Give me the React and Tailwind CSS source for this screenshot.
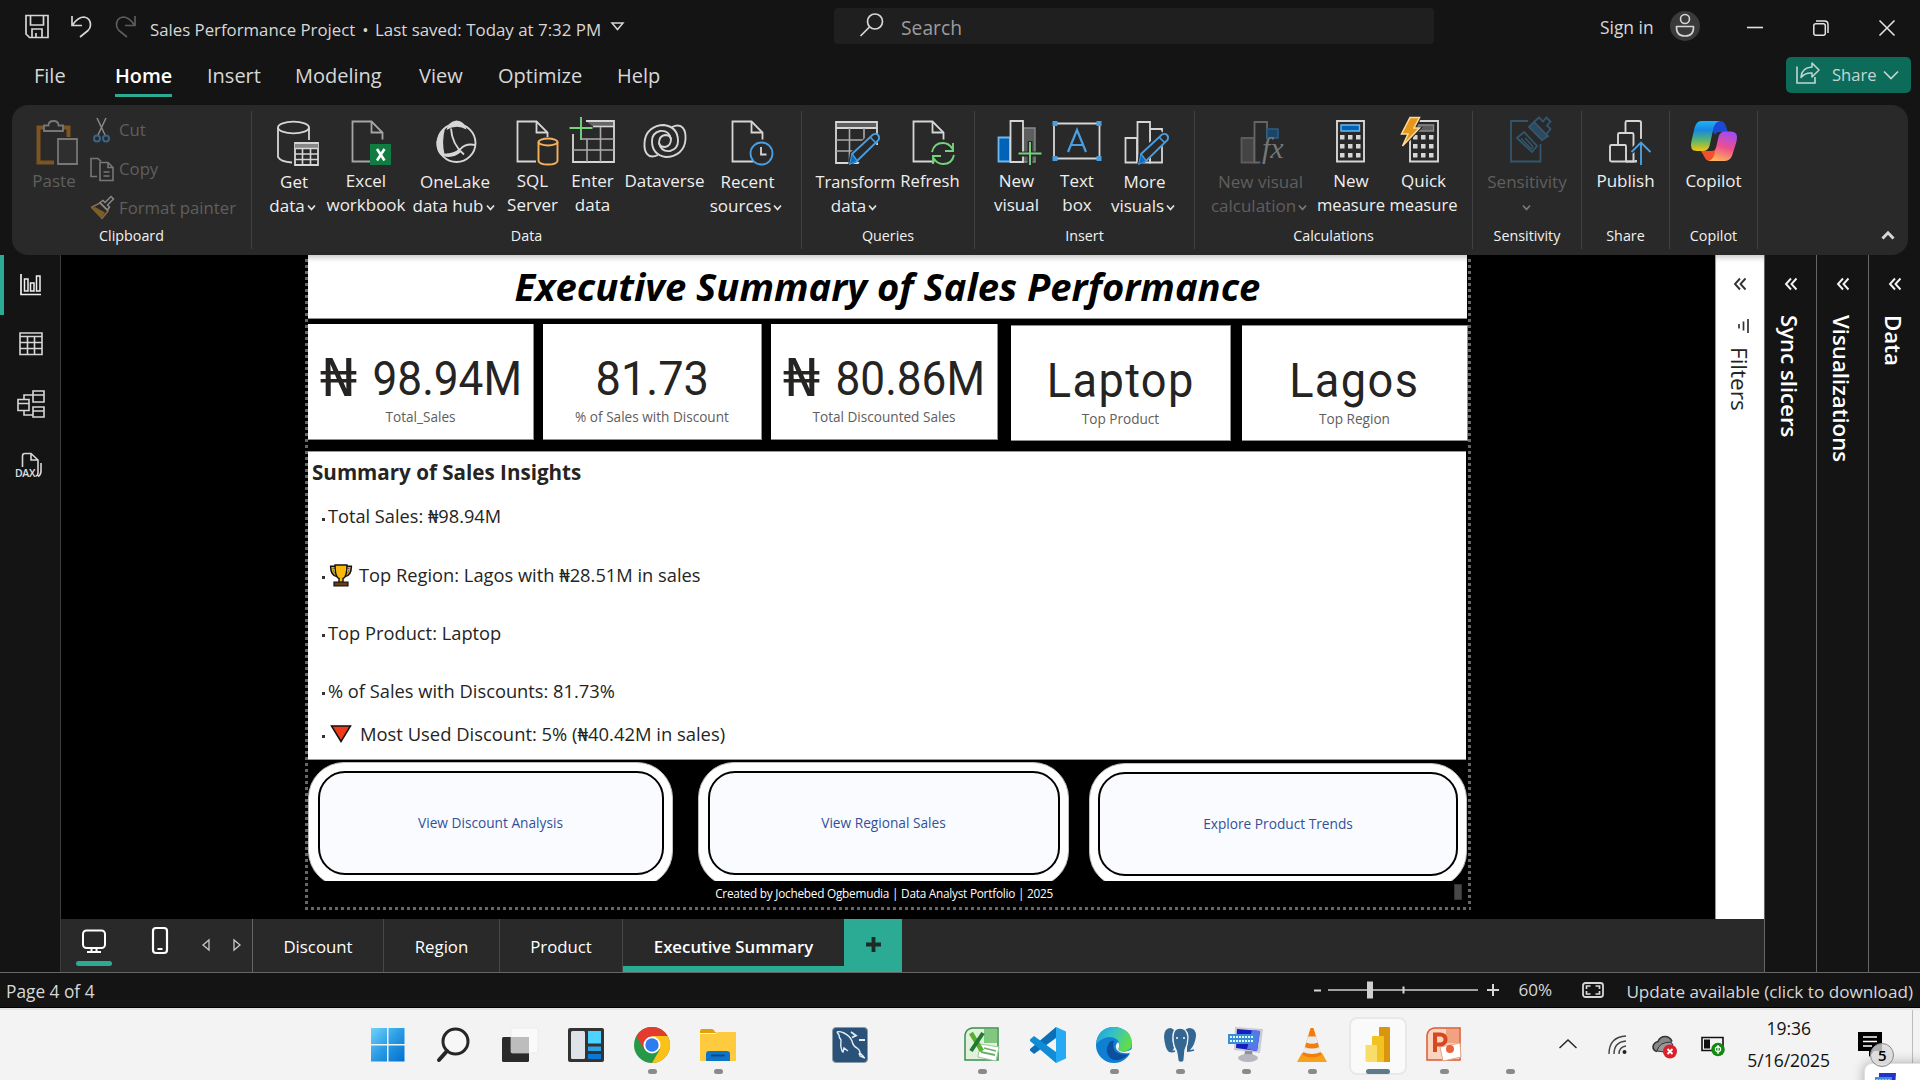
import React from "react";

const W = "#d6d6d6";

/* ---------- shared bits ---------- */
function Svg({ w, h, children, className = "" }) {
  return (
    <svg width={w} height={h} viewBox={`0 0 ${w} ${h}`} fill="none" className={`shrink-0 overflow-visible ${className}`}>
      {children}
    </svg>
  );
}
const Caret = ({ color = "#e4e4e4", className = "ml-[3px] mr-1" }) => (
  <Svg w={9} h={6} className={`mt-1 ${className}`}>
    <path d="M1 .5l3.500 4 3.500-4" stroke={color} strokeWidth="1.700" />
  </Svg>
);
const Doc = ({ x = 13, s = W, f = "none" }) => (
  <g transform={`translate(${x} 5.5)`} stroke={s} strokeWidth="1.8" fill={f}>
    <path d="M31 19V12L20 1H1v40h21" />
    <path d="M20 1v11h11" />
  </g>
);
const Pencil = () => (
  <g>
    <path d="M22 38L44 16l9 8-24 23-9 4z" fill="#292929" />
    <path d="M24 39L45 19.500q3-1.500 5 .5t.5 5L29 46z" stroke="#4a9fe0" strokeWidth="1.800" fill="#292929" />
    <path d="M42 22l5.500 5.500" stroke="#4a9fe0" strokeWidth="1.600" />
    <path d="M24 39l5 7-7.500 3.500z" fill="#0a6cc4" stroke="#4a9fe0" strokeWidth="1" />
  </g>
);

/* ---------- ribbon icons, all on a 56x52 grid ---------- */
const R = ({ children }) => <Svg w={56} h={52}>{children}</Svg>;

const PasteIcon = () => (
  <R>
    <path d="M18 12.500h-5.500v35H28M37 12.500h5.500V22" stroke="#7c5522" strokeWidth="4" />
    <path d="M18 16V10.500h4.500q0-4.500 5-4.500t5 4.500H37V16z" stroke="#777" strokeWidth="1.800" fill="#292929" />
    <path d="M32 24h19v25H32z" stroke="#777" strokeWidth="1.800" fill="#2f2f2f" />
  </R>
);
const GetDataIcon = () => (
  <R>
    <ellipse cx="27.500" cy="12.500" rx="15.500" ry="5.800" stroke={W} strokeWidth="1.800" />
    <path d="M12 12.500V42q3 5 14 5.500M43 12.500V25" stroke={W} strokeWidth="1.800" />
    <path d="M29 28h23v22H29z" fill="#292929" stroke={W} strokeWidth="1.800" />
    <path d="M29 29h23v4H29z" fill="#888" />
    <path d="M29 33.500h23M29 39h23M29 44.500h23M36.500 33v17M44.500 33v17" stroke={W} strokeWidth="1.600" />
  </R>
);
const ExcelDocIcon = () => (
  <R>
    <Doc x={13.5} s="#a6a6a6" />
    <path d="M32 29h21v21H32z" fill="#107c41" />
    <path d="M39 34l7.500 11.500M46.500 34L39 45.500" stroke="#fff" strokeWidth="2.600" />
  </R>
);
const OneLakeIcon = () => (
  <R>
    <circle cx="29.500" cy="28" r="19" stroke={W} strokeWidth="1.900" />
    <path d="M19.500 15q1.500-8.500 10-9.500 8 .5 10 9-10-5.500-20 .5z" fill={W} />
    <path d="M18 13.500q-6 4-8.500 13-.5 9 4 13.500 2.500-1 4-1-3-12 .5-25.500z" fill={W} />
    <path d="M24 13.500q1 16 13 26M14 39.500q13 1 19.500-5.500 5-6 15-4" stroke={W} strokeWidth="1.900" />
    <path d="M13 38q10 3 18-3l3 2q-8 7-18 4z" fill={W} />
  </R>
);
const SqlIcon = () => (
  <R>
    <Doc x={11.5} />
    <path d="M31 22h24v29H31z" fill="#292929" />
    <path d="M33.500 27v19q1 3.500 9.500 3.500t9.500-3.500V27" stroke="#f5b05a" strokeWidth="1.900" />
    <ellipse cx="43" cy="27" rx="9.500" ry="3.500" stroke="#f5b05a" strokeWidth="1.900" />
  </R>
);
const EnterDataIcon = () => (
  <R>
    <path d="M21 6h28v5H27z" fill="#666" />
    <path d="M21 6h28v41H8V19" stroke={W} strokeWidth="1.800" />
    <path d="M28 11.500h21" stroke={W} strokeWidth="1.600" />
    <path d="M16 24h33M8 35h41M22 24v23M35.500 12v35" stroke="#aaa" strokeWidth="1.600" />
    <path d="M16 2v23M4.500 13h23" stroke="#74d47c" strokeWidth="1.900" />
  </R>
);
const DataverseIcon = () => (
  <R>
    <g stroke={W} strokeWidth="1.900">
      <path d="M21 40C10 45 7 36 7.500 28 8 16 17 10 27 10q14 2 14 16 0 8-8 10-9 1-11-8 0-7 6-8 5 0 6 4" />
      <path d="M35 12C46 7 49 16 48.500 24 48 36 39 42 29 42q-14-2-14-16 0-8 8-10 9-1 11 8 0 7-6 8-5 0-6-4" />
    </g>
  </R>
);
const RecentIcon = () => (
  <R>
    <Doc x={11.5} />
    <circle cx="41.500" cy="38.500" r="11" stroke="#4a9fe0" strokeWidth="1.800" fill="#292929" />
    <path d="M41 32v7.500h5.500" stroke={W} strokeWidth="1.800" />
  </R>
);
const TransformIcon = () => (
  <R>
    <path d="M8 7h41v6H8z" fill="#5e5e5e" />
    <path d="M8 7h41v41H8zM8 13h41" stroke={W} strokeWidth="1.800" />
    <path d="M8 25h41M8 36h41M21.500 13v35M36 13v35" stroke="#aaa" strokeWidth="1.600" />
    <path d="M40 30h12v20H30z" fill="#292929" />
    <Pencil />
  </R>
);
const RefreshIcon = () => (
  <R>
    <Doc x={10.5} />
    <path d="M30 37q2-9 11-9 6 0 9.500 6M51 28v8h-8M52 40q-2 9-11 9-6 0-9.500-6M31 49v-8h8" stroke="#74d47c" strokeWidth="1.900" />
  </R>
);
const NewVisualIcon = () => (
  <R>
    <path d="M34 13h12v34H34z" fill="#5e5e5e" stroke="#8a8a8a" strokeWidth="1.400" />
    <path d="M9.500 22.500H21V46.500H9.500z" fill="#0063b8" stroke="#6cb8f0" strokeWidth="1.800" />
    <path d="M21.500 6H34v41H21.500z" fill="#292929" stroke={W} strokeWidth="1.800" />
    <path d="M41 26v25M29 39h24" stroke="#292929" strokeWidth="5" />
    <path d="M41 27v23M29.500 38.500h23" stroke="#74d47c" strokeWidth="1.900" />
  </R>
);
const TextBoxIcon = () => (
  <R>
    <path d="M5 8.500h45.500v35H5z" stroke={W} strokeWidth="1.800" />
    <path d="M3.500 6h5v5h-5zM47.500 6h5v5h-5zM3.500 41h5v5h-5zM47.500 41h5v5h-5z" fill="#4a9fe0" />
    <path d="M19 37l9-22 9 22M22 30h12" stroke="#4a9fe0" strokeWidth="2.200" />
  </R>
);
const MoreVisualsIcon = () => (
  <R>
    <path d="M8.500 23H20v24.500H8.500zM33 14h12v33.500H33z" stroke={W} strokeWidth="1.800" />
    <path d="M20.500 7H33v40.500H20.500z" fill="#292929" stroke={W} strokeWidth="1.800" />
    <Pencil />
  </R>
);
const VisualCalcIcon = () => (
  <R>
    <path d="M8.500 23H21v24.500H8.500z" fill="#444" stroke="#5c5c5c" strokeWidth="1.800" />
    <path d="M21.500 7H34v40.500H21.500z" fill="#292929" stroke="#666" strokeWidth="1.800" />
    <path d="M34 14h11v9H34z" fill="#1a4468" stroke="#2c5c85" strokeWidth="1.600" />
    <path d="M30 24h22v26H27z" fill="#292929" />
    <text x="29" y="43" fill="#777" fontSize="30" fontStyle="italic" fontFamily="Liberation Serif, serif">fx</text>
  </R>
);
const Keys = () => (
  <path d="M17 20h4.500v4.500H17zM25 20h4.500v4.500H25zM33 20h4.500v4.500H33zM17 29h4.500v4.500H17zM25 29h4.500v4.500H25zM33 29h4.500v4.500H33zM17 38h4.500v4.500H17zM25 38h4.500v4.500H25zM33 38h4.500v4.500H33z" fill={W} />
);
const NewMeasureIcon = () => (
  <R>
    <path d="M14 6h27v40.500H14z" stroke={W} strokeWidth="1.900" />
    <path d="M18 10h18.500v6H18z" fill="#0063b8" stroke="#6cb8f0" strokeWidth="1.400" />
    <Keys />
  </R>
);
const QuickMeasureIcon = () => (
  <R>
    <path d="M14 6h28v40.500H14z" stroke={W} strokeWidth="1.900" />
    <path d="M22 10h15.500v6H22z" fill="#5e5e5e" stroke="#8a8a8a" strokeWidth="1.400" />
    <Keys />
    <path d="M13 1h13l-5 11h6L7 33l4-13H3z" fill="#292929" />
    <path d="M14 2.500h9.500L18 13h5.500L6.500 31 12 19H5.500z" fill="#e8951c" stroke="#fbdc9a" strokeWidth="1.500" />
  </R>
);
const SensitivityIcon = () => (
  <R>
    <g stroke="#33566e" strokeWidth="1.800">
      <path d="M29 6H12v40.500h29.500V29" />
      <path d="M18 23l7-6 13 14-5 6z" />
      <path d="M22 23.500l10 10q2 0 1.500-2.500L26 23" strokeWidth="1.500" />
      <path d="M30 12l5-5 14 14-6 4z" fill="#2b4a60" />
      <path d="M35 7l5-4.500 4 4 3.500-4 4 4-3.500 4 3.500 3.500-4 5" />
    </g>
  </R>
);
const PublishIcon = () => (
  <R>
    <g stroke={W} strokeWidth="1.900">
      <path d="M28 46.500H13.500q-1.500 0-1.500-1.500V31.500q0-1.500 1.500-1.500H27q1 0 1 1.500z" />
      <path d="M20 30V19.500q0-1.500 1.500-1.500H34q1.500 0 1.500 1.500V46.500H28" />
      <path d="M27.500 18V7.500Q27.500 6 29 6h12q2 0 2 1.500V24" />
    </g>
    <path d="M43 24v28M33 37l10-10 10 10" stroke="#292929" strokeWidth="5" />
    <path d="M38 45v1.500H28" stroke={W} strokeWidth="1.900" />
    <path d="M43 50V27.500M33.500 37l9.500-9.500 9.500 9.500" stroke="#4a9fe0" strokeWidth="1.900" />
  </R>
);
const CopilotIcon = () => (
  <R>
    <defs>
      <linearGradient id="cpA" x1="0" y1="0" x2="0" y2="1">
        <stop offset="0" stopColor="#1fb3f5" /><stop offset=".3" stopColor="#1687e0" /><stop offset=".65" stopColor="#5bb56c" /><stop offset="1" stopColor="#f5c60c" />
      </linearGradient>
      <linearGradient id="cpB" x1=".6" y1="0" x2=".3" y2="1">
        <stop offset="0" stopColor="#a34bf0" /><stop offset=".5" stopColor="#ee4f8f" /><stop offset="1" stopColor="#ffb657" />
      </linearGradient>
    </defs>
    <path d="M22 6h12q4 0 5.500 4l2.500 7H33q-3 0-4 3z" fill="#1b49d3" />
    <path d="M15 36h11q3 0 4-3l2 13h-8q-4 0-5.500-4z" fill="#f4502e" />
    <path d="M15 6h19q-5 1-6.500 7l-4 18q-1.500 5-6.500 5h-6q-8 0-5.500-10l3-13q2-7 6.500-7z" fill="url(#cpA)" />
    <path d="M39 46H22q5-1 6.500-7l4-17q1.500-5.500 6.500-5.500h6q8 0 5.500 10l-4 13q-2 6.500-7.500 6.500z" fill="url(#cpB)" />
  </R>
);

function Item({ w, icon, l1, l2, caret, dim }) {
  return (
    <div className={`flex flex-col items-center ${w} ${dim ? "text-[#5f5f5f]" : "text-[#efefef]"}`}>
      {icon}
      <div className={`${caret ? "mt-[3px]" : "mt-[2px]"} flex h-6 items-center whitespace-nowrap leading-6`}>{l1}</div>
      <div className="flex h-6 items-center whitespace-nowrap leading-6">
        {l2}
        {caret && <Caret color={dim ? "#7a7a7a" : "#e4e4e4"} className={l2 ? "ml-[2px] mr-[3px]" : "mr-[2px]"} />}
      </div>
    </div>
  );
}
function Group({ w, label, children }) {
  return (
    <div className={`flex h-[138px] flex-col justify-between border-r border-[#404040] pb-[3px] pt-1 ${w}`}>
      <div className="flex h-[102px]">{children}</div>
      <div className="h-5 text-center text-[14.3px] leading-5 text-[#f2f2f2]">{label}</div>
    </div>
  );
}

function TitleBar() {
  return (
    <div className="flex h-[52px] items-start text-[17px] text-[#d8d8d8]">
      <div className="flex w-[834px] pl-[25px] pt-[14px]">
        <Svg w={24} h={24}>
          <path d="M1 1.500h22v22H4.500L1 20zM5.500 1.500v9.500h13V1.500M7 23.500V15h10v8.500M11 23v-4" stroke={W} strokeWidth="1.700" />
        </Svg>
        <Svg w={22} h={24} className="ml-[22px]">
          <path d="M1 2v9.500h10M1.500 11Q7 3 13 3q6.500 1 6.500 8 0 3-2.500 5.500L9 23" stroke={W} strokeWidth="1.700" />
        </Svg>
        <Svg w={22} h={24} className="ml-[21px]">
          <path d="M21 2v9.500H11M20.500 11Q15 3 9 3q-6.500 1-6.500 8 0 3 2.500 5.500L13 23" stroke="#5c5c5c" strokeWidth="1.700" />
        </Svg>
        <div className="ml-[14px] mt-[4px] flex h-6 items-center whitespace-nowrap text-[16.8px]">
          <span className="w-[206px]">Sales Performance Project</span>
          <span className="w-[19px] text-center">•</span>
          <span className="w-[227px] text-[16.9px]">Last saved: Today at 7:32 PM</span>
        </div>
        <Svg w={13} h={9} className="ml-[9px] mt-[8px]">
          <path d="M1 1h11L6.500 7.500z" stroke={W} strokeWidth="1.500" />
        </Svg>
      </div>
      <div className="mt-2 flex h-9 w-[600px] items-center rounded bg-[#1f1f1f] pl-[26px]">
        <Svg w={24} h={24} className="-mt-[3px]">
          <circle cx="15" cy="8.500" r="7.500" stroke={W} strokeWidth="1.700" />
          <path d="M9.500 14L.5 23" stroke={W} strokeWidth="1.700" />
        </Svg>
        <span className="ml-[17px] mt-[4px] text-[19.3px] text-[#9c9c9c]">Search</span>
      </div>
      <div className="flex flex-1 items-start">
        <span className="ml-[166px] mt-[15px] w-[70px] whitespace-nowrap text-[17.400px] leading-6">Sign in</span>
        <Svg w={30} h={30} className="mt-[11px]">
          <circle cx="15" cy="15" r="15" fill="#3a3a3a" />
          <circle cx="15" cy="8" r="4.500" stroke={W} strokeWidth="1.600" />
          <path d="M6.500 15.500h17q.5 9.500-8.500 9.500T6.500 15.500z" stroke={W} strokeWidth="1.600" strokeLinejoin="round" />
        </Svg>
        <Svg w={16} h={16} className="ml-[47px] mt-[20px]"><path d="M0 7.500h16" stroke="#e2e2e2" strokeWidth="1.600" /></Svg>
        <Svg w={16} h={16} className="ml-[50px] mt-[20px]">
          <rect x=".8" y="3.800" width="11.500" height="11.500" rx="2" stroke="#e2e2e2" strokeWidth="1.500" />
          <path d="M3 1h8.500q3.500 0 3.500 3.500V13" stroke="#e2e2e2" strokeWidth="1.500" />
        </Svg>
        <Svg w={16} h={16} className="ml-[50px] mt-[20px]"><path d="M.5.5l15 15M15.500.5l-15 15" stroke="#e2e2e2" strokeWidth="1.600" /></Svg>
      </div>
    </div>
  );
}

function MenuRow() {
  const items = [["File", "w-[81px]"], ["Home", "w-[92px]"], ["Insert", "w-[88px]"], ["Modeling", "w-[124px]"], ["View", "w-[79px]"], ["Optimize", "w-[119px]"], ["Help", "w-[80px]"]];
  return (
    <div className="flex h-[53px] justify-between pl-[34px] pr-[9px] text-[20px] text-[#d8d8d8]">
      <div className="flex pt-[9px]">
        {items.map(([t, w]) => (
          <div key={t} className={w}>
            <span className={t === "Home" ? "inline-block h-[36px] whitespace-nowrap border-b-[3px] border-[#2baa94] text-[19.8px] font-semibold leading-[30px] text-white" : "inline-block leading-[30px]"}>{t}</span>
          </div>
        ))}
      </div>
      <div className="mt-[5px] flex h-9 w-[125px] items-center rounded-[5px] bg-[#0d6b5a] pl-[10px] text-[#c5d6d2]">
        <Svg w={24} h={22} className="-mt-1">
          <path d="M1 4.500v16.500h18v-6" stroke="#c5d6d2" strokeWidth="1.600" />
          <path d="M5 15.500Q5.500 5.500 16 5V1l7 7-7 7v-4Q9 10.500 5 15.500z" stroke="#c5d6d2" strokeWidth="1.500" strokeLinejoin="round" />
        </Svg>
        <span className="ml-[12px] mt-px text-[16.6px]">Share</span>
        <Svg w={16} h={9} className="ml-[6px]"><path d="M1 .5l7 7 7-7" stroke="#c5d6d2" strokeWidth="1.700" /></Svg>
      </div>
    </div>
  );
}

function Ribbon() {
  return (
    <div className="mx-3 flex h-[150px] rounded-2xl bg-[#292929] pt-1.5 text-[17px]">
      <Group w="w-[240px]" label="Clipboard">
        <div className="ml-3"><Item w="w-[60px]" icon={<PasteIcon />} l1="Paste" dim /></div>
        <div className="-mt-[5px] flex flex-col text-[16.75px] text-[#5f5f5f]">
          <div className="flex h-[39px] shrink-0 items-center">
            <Svg w={32} h={26}>
              <path d="M13 1l8.500 18M22 1l-8.500 18" stroke="#8a8a8a" strokeWidth="1.500" />
              <circle cx="13" cy="21.500" r="3" stroke="#3b6385" strokeWidth="2" /><circle cx="22" cy="21.500" r="3" stroke="#3b6385" strokeWidth="2" />
            </Svg>
            <span className="ml-[3px]">Cut</span>
          </div>
          <div className="flex h-[39px] shrink-0 items-center">
            <Svg w={32} h={26}>
              <path d="M13 20.500H7v-18h7l3 3" stroke="#777" strokeWidth="1.600" />
              <path d="M16 6.500h8l5 5v13H16zM24 6.500v5h5M19.500 16h6M19.500 20h6" stroke="#777" strokeWidth="1.600" />
            </Svg>
            <span className="ml-[3px]">Copy</span>
          </div>
          <div className="flex h-[39px] shrink-0 items-center">
            <Svg w={32} h={26}>
              <path d="M7 13l10 10.500 4-6L11 12z" fill="#7c5f28" />
              <path d="M7 12.500l9-4.500 8 8-6.500 8" stroke="#86704a" strokeWidth="1.500" />
              <path d="M16 7.500l3-2 2 2L27 1.500l2.500 2.500-6 6 2 2-2 3z" stroke="#888" strokeWidth="1.500" />
            </Svg>
            <span className="ml-[3px] whitespace-nowrap">Format painter</span>
          </div>
        </div>
      </Group>
      <Group w="w-[550px]" label="Data">
        <div className="w-3" />
        <Item w="w-[60px]" icon={<GetDataIcon />} l1="Get" l2="data" caret />
        <Item w="w-[84px]" icon={<ExcelDocIcon />} l1="Excel" l2="workbook" />
        <Item w="w-[94px]" icon={<OneLakeIcon />} l1="OneLake" l2="data hub" caret />
        <Item w="w-[61px]" icon={<SqlIcon />} l1="SQL" l2="Server" />
        <Item w="w-[59px]" icon={<EnterDataIcon />} l1="Enter" l2="data" />
        <Item w="w-[85px]" icon={<DataverseIcon />} l1="Dataverse" />
        <Item w="w-[81px]" icon={<RecentIcon />} l1="Recent" l2="sources" caret />
      </Group>
      <Group w="w-[173px]" label="Queries">
        <div className="w-[11px]" />
        <Item w="w-[85px]" icon={<TransformIcon />} l1={<span className="text-[16.4px]">Transform</span>} l2="data" caret />
        <Item w="w-[64px]" icon={<RefreshIcon />} l1={<span className="text-[16.6px]">Refresh</span>} />
      </Group>
      <Group w="w-[220px]" label="Insert">
        <div className="w-[17px]" />
        <Item w="w-[49px]" icon={<NewVisualIcon />} l1="New" l2="visual" />
        <Item w="w-[72px]" icon={<TextBoxIcon />} l1="Text" l2="box" />
        <Item w="w-[63px]" icon={<MoreVisualsIcon />} l1="More" l2="visuals" caret />
      </Group>
      <Group w="w-[278px]" label="Calculations">
        <div className="w-[10px]" />
        <Item w="w-[111px]" icon={<VisualCalcIcon />} l1="New visual" l2="calculation" caret dim />
        <Item w="w-[70px]" icon={<NewMeasureIcon />} l1="New" l2={<span className="text-[16.6px]">measure</span>} />
        <Item w="w-[75px]" icon={<QuickMeasureIcon />} l1="Quick" l2={<span className="text-[16.6px]">measure</span>} />
      </Group>
      <Group w="w-[109px]" label="Sensitivity">
        <Item w="w-[108px]" icon={<SensitivityIcon />} l1="Sensitivity" caret dim />
      </Group>
      <Group w="w-[88px]" label="Share">
        <Item w="w-[87px]" icon={<PublishIcon />} l1="Publish" />
      </Group>
      <Group w="w-[88px]" label="Copilot">
        <Item w="w-[87px]" icon={<CopilotIcon />} l1="Copilot" />
      </Group>
      <div className="flex flex-1 items-end justify-end pb-[15px] pr-[13px]">
        <Svg w={14} h={9}><path d="M1.500 7.500L7 1.800l5.500 5.700" stroke={W} strokeWidth="3" /></Svg>
      </div>
    </div>
  );
}

function LeftRail() {
  return (
    <div className="flex w-[61px] shrink-0 flex-col border-r border-[#3c3c3c] bg-[#141414]">
      <div className="flex h-[60px] items-center border-l-4 border-[#2baa94] pb-px pl-4">
        <Svg w={22} h={22}>
          <path d="M1 0v20.500h20" stroke="#f0f0f0" strokeWidth="1.700" />
          <path d="M4.500 5h3.500v12H4.500zM10.500 9H14v8h-3.500zM16.500 2H20v15h-3.500z" stroke="#f0f0f0" strokeWidth="1.500" />
        </Svg>
      </div>
      <div className="-mt-px flex h-[60px] items-center pl-[19px]">
        <Svg w={24} h={24}>
          <path d="M1 1h22v21.500H1zM1 4.500h22M1 10.500h22M1 16.500h22M8.500 4.500v18M15.500 4.500v18" stroke={W} strokeWidth="1.600" />
        </Svg>
      </div>
      <div className="flex h-[60px] items-center pl-[17px]">
        <Svg w={28} h={28}>
          <path d="M1 9.500h11v11H1zM1 13.500h11M16 1h11v11H16zM16 5h11M16 17h11v10H16zM16 21h11M7 9V5h9M7 21v4h9" stroke={W} strokeWidth="1.600" />
        </Svg>
      </div>
      <div className="flex h-[61px] items-center pl-[15px]">
        <Svg w={28} h={26}>
          <path d="M7.500 15V4q0-2.500 2.500-2.500h6L23 8v12q0 4-2.500 4M16 1.500V8h7M26 11v8q0 4-3 5.500" stroke={W} strokeWidth="1.600" />
          <text x="0" y="25" fontSize="10.500" fontWeight="600" fill="#e0e0e0" fontFamily="Open Sans, sans-serif" textLength="20.500">DAX</text>
        </Svg>
      </div>
    </div>
  );
}

function Card({ className, naira, value, scale, label }) {
  return (
    <div className={`flex h-[116px] flex-col items-center border-b border-r border-[#8f8f8f] bg-white pt-px ${className}`}>
      <div className="mt-[29px] flex h-[50px] items-center whitespace-nowrap font-[Roboto] text-[48px] leading-[50px] text-[#252423]">
        {naira && <span className="-mt-[7px] mr-[16px] flex w-[37px] scale-x-[1.22] justify-center font-['Noto_Sans'] text-[53px] font-normal leading-[50px]">₦</span>}
        <span className={scale}>{value}</span>
      </div>
      <div className="mt-[3px] whitespace-nowrap text-[13.6px] leading-5 text-[#605e5c]">{label}</div>
    </div>
  );
}

function NavButton({ w, inner, label, className = "" }) {
  return (
    <div className={`flex h-[119px] items-start justify-center overflow-hidden ${w} ${className}`}>
      <div className="flex h-[125px] w-full shrink-0 items-start justify-center rounded-[36px] border border-[#bdbdbd] bg-white pt-2">
        <div className={`flex h-[104px] items-center justify-center rounded-[27px] border-[2.500px] border-black bg-[#fafbfe] text-[13.7px] text-[#31509b] ${inner}`}>
          {label}
        </div>
      </div>
    </div>
  );
}

const Trophy = () => (
  <Svg w={22} h={23}>
    <path d="M6 3H1.500q0 8 6 9M16 3h4.500q0 8-6 9" stroke="#111" strokeWidth="3.200" />
    <path d="M6 3.500H2q.5 6.500 5 8M16 3.500h4q-.5 6.500-5 8" stroke="#f2b10e" strokeWidth="1.200" />
    <path d="M5 1h12q0 12-4 13.500v4h-4v-4Q5 13 5 1z" fill="#f8b90c" stroke="#111" strokeWidth="1.400" />
    <path d="M4 18h14v4H4z" fill="#6b3b18" stroke="#111" strokeWidth="1.200" />
  </Svg>
);
const RedTriangle = () => (
  <Svg w={22} h={18}><path d="M1.500 1h19L11 16.500z" fill="#f03a17" stroke="#111" strokeWidth="1.500" /></Svg>
);
const Naira = () => <span className="font-['Noto_Sans']">₦</span>;

function Bullet({ h, icon, children }) {
  return (
    <li className={`flex items-center whitespace-nowrap ${h}`}>
      <span className="mr-[5px] mt-[5px] h-[3px] w-[3px] bg-[#333]" />
      {icon}
      <span className={icon ? "ml-[7px]" : "-ml-[2px]"}>{children}</span>
    </li>
  );
}

const DOT_V = "bg-[repeating-linear-gradient(180deg,#666_0_3px,transparent_3px_6px)]";
const DOT_H = "bg-[repeating-linear-gradient(90deg,#666_0_3px,transparent_3px_6px)]";

function Report() {
  return (
    <div className="flex flex-1 flex-col bg-black pl-[244px] font-['Open_Sans']">
      <div className="flex h-[652px]">
        <div className={`mt-1 w-[3px] ${DOT_V}`} />
        <div className="w-[1160px]">
          <div className="flex h-[64px] w-[1159px] items-center justify-center border-b border-[#8f8f8f] bg-white text-[38.2px] font-bold italic text-black shadow-[inset_0_6px_6px_-4px_rgba(0,0,0,0.25)]">
            Executive Summary of Sales Performance
          </div>
          <div className="mt-[5px] flex">
            <Card className="w-[226px]" naira value="98.94M" scale="scale-x-[0.92] -mx-[7px]" label="Total_Sales" />
            <Card className="ml-[9px] w-[219px]" value="81.73" scale="scale-x-[0.94]" label="% of Sales with Discount" />
            <Card className="ml-[9px] w-[227px]" naira value="80.86M" scale="scale-x-[0.92] -mx-[7px]" label="Total Discounted Sales" />
            <Card className="ml-[13px] mt-px w-[220px] border-t" value="Laptop" scale="scale-x-[0.94] tracking-[1.500px]" label="Top Product" />
            <Card className="ml-[11px] mt-px w-[226px] border-t" value="Lagos" scale="scale-x-[0.94] tracking-[1.500px]" label="Top Region" />
          </div>
          <div className="mt-[10px] h-[309px] w-[1158px] border-b border-t border-[#9a9a9a] bg-white pl-1 text-[#252423]">
            <h2 className="mt-[5px] text-[20.6px] font-bold leading-[30px]">Summary of Sales Insights</h2>
            <ul className="ml-[10px] text-[18.3px]">
              <Bullet h="mt-[15px] h-[30px] text-[18.200px]">Total Sales: <Naira />98.94M</Bullet>
              <Bullet h="mt-[28px] h-[30px]" icon={<Trophy />}>Top Region: Lagos with <Naira />28.51M in sales</Bullet>
              <Bullet h="mt-[28px] h-[30px]">Top Product: Laptop</Bullet>
              <Bullet h="mt-[28px] h-[30px]">% of Sales with Discounts: 81.73%</Bullet>
              <Bullet h="mt-[13px] h-[30px]" icon={<RedTriangle />}><span className="ml-px text-[18.4px]">Most Used Discount: 5% (<Naira />40.42M in sales)</span></Bullet>
            </ul>
          </div>
          <div className="mt-[2px] flex">
            <NavButton w="w-[365px]" inner="w-[346px]" label="View Discount Analysis" />
            <NavButton w="w-[371px]" inner="w-[352px]" label="View Regional Sales" className="ml-[25px]" />
            <NavButton w="w-[378px]" inner="w-[360px]" label="Explore Product Trends" className="ml-[20px] pt-px" />
          </div>
          <div className="flex h-[26px] items-center justify-end">
            <span className="mr-[401px] whitespace-nowrap text-[11.8px] font-medium tracking-[-0.24px] text-white">Created by Jochebed Ogbemudia | Data Analyst Portfolio | 2025</span>
            <span className="mr-[6px] mt-[-4px] h-4 w-2 border border-[#333] bg-[#484848]" />
          </div>
        </div>
        <div className={`mt-1 w-[3px] ${DOT_V}`} />
      </div>
      <div className={`h-[3px] w-[1166px] ${DOT_H}`} />
    </div>
  );
}

function PageTabs() {
  return (
    <div className="flex h-[53px] bg-[#292929] text-[16.8px] text-white">
      <div className="flex w-[192px] border-r border-[#666]">
        <div className="ml-[15px] mt-[10px] flex w-9 flex-col items-center">
          <Svg w={24} h={24}>
            <rect x="1" y="1.500" width="22" height="17.500" rx="3.500" stroke="#fff" strokeWidth="2" />
            <path d="M9.500 19v3.500M14.500 19v3.500M5 23h14" stroke="#fff" strokeWidth="2" />
          </Svg>
          <div className="mt-[8px] h-[5px] w-9 rounded-full bg-[#2baa94]" />
        </div>
        <Svg w={16} h={28} className="ml-[40px] mt-[8px]">
          <rect x="1" y="1" width="14" height="25" rx="3" stroke="#fff" strokeWidth="2.200" /><path d="M5.500 22h5" stroke="#fff" strokeWidth="2" />
        </Svg>
        <Svg w={8} h={12} className="ml-[34px] mt-[20px]"><path d="M7 1v10L1 6z" stroke="#c8c8c8" strokeWidth="1.300" /></Svg>
        <Svg w={8} h={12} className="ml-[23px] mt-[20px]"><path d="M1 1v10l6-5z" stroke="#c8c8c8" strokeWidth="1.300" /></Svg>
      </div>
      <div className="flex w-[131px] items-center justify-center border-r border-[#484848] pt-[2px]">Discount</div>
      <div className="flex w-[116px] items-center justify-center border-r border-[#484848] pt-[2px]">Region</div>
      <div className="flex w-[123px] items-center justify-center border-r border-[#484848] pt-[2px]">Product</div>
      <div className="flex w-[221px] items-center justify-center border-b-[6px] border-[#2baa94] pt-[8px] font-semibold">Executive Summary</div>
      <div className="flex w-[58px] items-center justify-center bg-[#2baa94] pb-[3px]">
        <Svg w={15} h={15}><path d="M7.500 0v15M0 7.500h15" stroke="#1d2b28" strokeWidth="3.800" /></Svg>
      </div>
    </div>
  );
}

const Chevrons = ({ c }) => (
  <Svg w={12} h={12}><path d="M6 .5L1 6l5 5.500M11.500.5L6.500 6l5 5.500" stroke={c} strokeWidth="1.900" /></Svg>
);
function SidePanel({ title }) {
  return (
    <div className="flex w-[52px] flex-col items-center border-l border-[#666] bg-[#141414] pt-[23px]">
      <Chevrons c="#f4f4f4" />
      <div className="mt-[25px] mr-[3px] whitespace-nowrap text-[22.2px] font-semibold leading-[30px] text-white [writing-mode:vertical-rl]">{title}</div>
    </div>
  );
}

function StatusBar() {
  return (
    <div className="flex h-9 items-center justify-between border-b border-t border-b-black border-t-[#666] bg-[#141414] pl-[6px] pr-[7px] text-[17.1px] text-[#d8d8d8]">
      <span className="mt-[3px] text-[17.3px]">Page 4 of 4</span>
      <div className="flex items-center whitespace-nowrap">
        <Svg w={186} h={18} className="mr-[18px]">
          <path d="M0 9.500h7M173 9h12M179 3v12" stroke={W} strokeWidth="2" />
          <path d="M14 9h150" stroke="#cfcfcf" strokeWidth="1.300" />
          <path d="M53 .5h6v17h-6z" fill="#d0d0d0" /><path d="M89.500 5.500v7" stroke={W} strokeWidth="2" />
        </Svg>
        <span className="w-[64px] text-[17.1px]">60%</span>
        <Svg w={22} h={16} className="mr-[22px]">
          <rect x="1" y="1" width="20" height="14" rx="2.500" stroke={W} strokeWidth="1.800" />
          <path d="M4.500 7V4h4M17.500 7V4h-4M4.500 9v3h4M17.500 9v3h-4" stroke={W} strokeWidth="1.700" />
        </Svg>
        <span className="mt-[3px] text-[17.15px]">Update available (click to download)</span>
      </div>
    </div>
  );
}

/* ---------- taskbar icons, 36x36 ---------- */
const T = ({ children }) => <Svg w={36} h={36}>{children}</Svg>;
const Windows = () => (
  <T>
    <defs><linearGradient id="win" x1="0" y1="0" x2="1" y2="1"><stop offset="0" stopColor="#6fd3fb" /><stop offset=".5" stopColor="#2a9be4" /><stop offset="1" stopColor="#0070cf" /></linearGradient></defs>
    <path d="M1 1h16v16H1zM18.500 1h16v16h-16zM1 18.500h16v16H1zM18.500 18.500h16v16h-16z" fill="url(#win)" />
  </T>
);
const TaskSearch = () => (
  <T><circle cx="19.500" cy="14.500" r="12.500" stroke="#262626" strokeWidth="3" fill="#f7f7f7" /><path d="M11 24L3 33" stroke="#262626" strokeWidth="4" strokeLinecap="round" /></T>
);
const TaskView = () => (
  <T><rect x="0" y="10" width="27" height="25" rx="1.500" fill="#2b2b2b" /><rect x="9" y="1" width="27" height="25" rx="1.500" fill="#fafafa" stroke="#e6e6e6" strokeWidth=".6" /><path d="M9 10h18v16H9z" fill="#bdbdbd" /></T>
);
const Widgets = () => (
  <T>
    <rect x="0" y="1" width="36" height="34" rx="2" fill="#333" />
    <rect x="3" y="4" width="14" height="28" rx="1.500" fill="#dfe3e8" /><path d="M20 4h13v12.500H20z" fill="#4cd3ff" /><path d="M20 19.500h13v4.500H20z" fill="#2aa2e6" /><path d="M20 27h13v5H20z" fill="#0a78d8" />
  </T>
);
const Chrome = () => (
  <T>
    <circle cx="18" cy="18" r="18" fill="#279847" />
    <path d="M2.400 9A18 18 0 0 1 33.600 9H18L10.200 22.500z" fill="#e33b2e" />
    <path d="M33.600 9A18 18 0 0 1 18 36l7.800-13.500L18 9z" fill="#fbc116" />
    <circle cx="18" cy="18" r="8.500" fill="#fff" /><circle cx="18" cy="18" r="6.700" fill="#2f7cf0" />
  </T>
);
const Folder = () => (
  <T>
    <path d="M0 4q0-2 2-2h10q2 0 3 3l2 1H0z" fill="#e2a108" /><path d="M0 7h15l3-2h18v29H0z" fill="#fecb3f" />
    <path d="M6 34v-7q0-3 3-3h18q3 0 3 3v7z" fill="#0e74c8" /><path d="M12 28.500h12" stroke="#0a4a88" strokeWidth="2" strokeLinecap="round" />
  </T>
);
const MySql = () => (
  <T>
    <rect x=".5" y=".5" width="35" height="35" rx="3.500" fill="#2a5279" stroke="#8a9aa8" />
    <path d="M5 5q2-1 7 1 6 3 8 8 1 5 5 7 3 2 3 5l4 4M5 5l2 3q0 3 2 5-1 6 1 11l1 1 1-4 4 3M27 26l1 3 5 2" stroke="#e3edf5" strokeWidth="1.400" />
    <path d="M19 5l5 3.500-4 2M27 13h6" stroke="#e3edf5" strokeWidth="1.800" />
  </T>
);
const Excel = () => (
  <T>
    <path d="M8 1h26v32H1V8q1-6 7-7z" fill="#e2f1dc" stroke="#3a8f4c" strokeWidth="1.500" />
    <path d="M20 2h13v14H20z" fill="#82c77f" /><path d="M16 17l19 3-3 14-18-4z" fill="#fff" stroke="#9cc99c" />
    <path d="M20 21l12 3M17 25l14 3" stroke="#6ab06a" strokeWidth="1.800" />
    <path d="M7 6l11 18" stroke="#5aae32" strokeWidth="4.500" /><path d="M19 6L7 24" stroke="#1f7a34" strokeWidth="4" />
  </T>
);
const VsCode = () => (
  <T>
    <path d="M26 0v11L4 27 0 23.500V22z" fill="#0b6fb8" /><path d="M26 36V25L4 9 0 12.500V14z" fill="#108bd6" /><path d="M26 0l10 4.500v27L26 36z" fill="#27a9f4" />
  </T>
);
const Edge = () => (
  <T>
    <defs>
      <linearGradient id="eg1" x1="0" y1="0" x2="1" y2=".4"><stop offset="0" stopColor="#1c9be0" /><stop offset=".5" stopColor="#35c1c9" /><stop offset="1" stopColor="#5fdc4f" /></linearGradient>
    </defs>
    <circle cx="18" cy="18" r="18" fill="#0f7fd4" />
    <path d="M0 17Q2 0 18 0q17 1 18 16 0 8-9 8.500-6 0-5-3 3-5-1-9Q11 6 0 17z" fill="url(#eg1)" />
    <path d="M13 16q-5 8 1 15 8 6 19-4-9 2-14-3-3-4-1-10-3-1-5 2z" fill="#0c4f9e" />
    <path d="M22 15q-4 4-1 8 4 4 12 3l3 2v-6q-6 4-12 2-3-1-1-4 1-3-1-5z" fill="#f3f3f3" />
  </T>
);
const Postgres = () => (
  <T>
    <path d="M9 1Q2 1 2 10q1 12 5 15 3 1 5-4-3-10 0-18zM27 1q7 0 7 8-1 9-6 14h-3q1-14-3-20z" fill="#336791" />
    <path d="M18 1q-7 0-7 9 0 8 3 13 1 2 2 11 3 3 6 0l1-11q3-6 3-13Q25 1 18 1z" fill="#336791" stroke="#f3f3f3" strokeWidth="1.300" />
    <path d="M13 24q-3 1-5 0M25 24q4 0 7-1" stroke="#336791" strokeWidth="1.800" /><circle cx="15" cy="11" r="1" fill="#fff" /><circle cx="22" cy="11" r="1" fill="#fff" />
  </T>
);
const Monitor = () => (
  <T>
    <path d="M7 0l28 2-3 24-26-3z" fill="#c9ccd4" /><path d="M9 2l23 2-3 20-21-3z" fill="#141fbd" /><path d="M24 3l8 1-3 20-10-2z" fill="#5a74ee" />
    <path d="M0 7h27v10H0z" fill="#3b8fd8" /><path d="M2 10h23M2 14h23" stroke="#dff" strokeWidth="1.800" strokeDasharray="2 1" />
    <path d="M17 24h7l1 6h-9z" fill="#8f9196" /><ellipse cx="20" cy="31" rx="10" ry="4" fill="#b5b7bc" />
  </T>
);
const Vlc = () => (
  <T>
    <path d="M8 26h20l5 9H3z" fill="#f7a01c" /><path d="M16.500 1h3l8 27q-9.500 5-19 0z" fill="#f27c0c" /><path d="M14 9.500h8l2 6q-6 2.500-12 0zM10.500 20q7.500 3 15 0l1.500 5q-9 4-18 0z" fill="#e9ecef" />
  </T>
);
const PowerBi = () => (
  <T>
    <path d="M20 0h9q1 0 1 1v34H19V1q0-1 1-1z" fill="#d8960f" /><path d="M13 9h10q1 0 1 1v25H12V10q0-1 1-1z" fill="#f2c220" /><path d="M6 18h10q1 0 1 1v16H7q-1.500 0-1.500-1.500V18.500z" fill="#f9dd6b" />
  </T>
);
const PowerPoint = () => (
  <T>
    <path d="M8 1h26v32H1V8q1-6 7-7z" fill="#fbd3bf" stroke="#d95b33" strokeWidth="1.500" />
    <path d="M20 2h13v14H20z" fill="#f2a27f" /><path d="M14 20l20-4 1 14-18 4z" fill="#fff" stroke="#e4a58c" /><circle cx="24" cy="22" r="4" fill="#e8633a" />
    <path d="M9 25V7.500h5.500q5 .5 5 5t-5 5H9" stroke="#d4491f" strokeWidth="4" />
  </T>
);

function Taskbar() {
  const apps = [[Windows], [TaskSearch], [TaskView], [Widgets], [Chrome, 1], [Folder, 1], [], [MySql], [], [Excel, 1], [VsCode], [Edge, 1], [Postgres, 1], [Monitor, 1], [Vlc, 1], [PowerBi, 2], [PowerPoint, 1], [null, 1]];
  return (
    <div className="flex h-[72px] shrink-0 border-t-2 border-[#e6e6e6] bg-[#f3f3f3] pl-[355px] text-black">
      {apps.map(([Icon, s], i) => (
        <div key={i} className="flex w-[66px] shrink-0 flex-col items-center pt-[7px]">
          <div className={`flex h-[58px] w-[58px] flex-col items-center rounded-lg ${s === 2 ? "border-2 border-[#e8e8e8] bg-[#fafafa] pt-[8px]" : "pt-[10px]"}`}>
            {Icon ? <Icon /> : <div className="h-9" />}
            {s === 1 && <div className="mt-[6px] h-[5px] w-[9px] shrink-0 rounded-full bg-[#8a8a8a]" />}
            {s === 2 && <div className="mt-[6px] h-[5px] w-6 shrink-0 rounded-full bg-[#5d7a8a]" />}
          </div>
        </div>
      ))}
      <div className="flex flex-1 overflow-hidden">
        <Svg w={18} h={10} className="ml-[16px] mt-[29px]"><path d="M.5 9L9 1l8.500 8" stroke="#222" strokeWidth="1.400" /></Svg>
        <Svg w={20} h={20} className="ml-[31px] mt-[25px]">
          <path d="M1 19Q1 2 18 1M6 19Q6 7 18 6M11 19q0-7 7-8" stroke="#444" strokeWidth="1.400" /><circle cx="16.500" cy="17" r="2" fill="#222" />
        </Svg>
        <Svg w={25} h={22} className="ml-[24px] mt-[25px]">
          <path d="M5 16.500q-4-1-4-5 1-4 5-5 2-5 7-5t7 5" stroke="#333" strokeWidth="1.600" fill="#888" /><path d="M5 16q2-9 14-9l2 3-9 7z" fill="#999" stroke="#333" />
          <circle cx="18" cy="16.500" r="7" fill="#d8212b" /><path d="M15.500 14l5 5M20.500 14l-5 5" stroke="#fff" strokeWidth="1.800" />
        </Svg>
        <Svg w={24} h={22} className="ml-[24px] mt-[25px]">
          <path d="M1 2.500h21v13H1z" stroke="#111" strokeWidth="1.600" /><path d="M3 4.500h6v9H3z" fill="#111" />
          <circle cx="17" cy="14.500" r="6.800" fill="#128a12" /><path d="M17 10v9M14.500 15.500V13l2.500-2 2.500 2v2.500l-2.500 2z" stroke="#fff" strokeWidth="1.200" />
        </Svg>
        <div className="ml-[14px] mt-[2px] flex w-[100px] flex-col items-center text-[17.5px] text-[#111]">
          <span className="leading-8">19:36</span>
          <span className="leading-8">5/16/2025</span>
        </div>
        <div className="relative ml-[20px] mt-[22px] h-[47px] w-[62px]">
          <Svg w={24} h={26}>
            <path d="M0 0h24v19h-8l-5 6v-6H0z" fill="#000" /><path d="M5 5h14M5 9.500h14M5 14h9" stroke="#fff" strokeWidth="1.500" />
          </Svg>
          <div className="absolute right-[7px] top-[-22px] h-16 w-px bg-[#bdbdbd]" />
          <div className="absolute left-[6px] top-[31px] h-10 w-[80px] rounded-lg border border-[#e0e0e0] bg-white shadow-[0_0_12px_rgba(0,0,0,0.3)]">
            <Svg w={24} h={12} className="ml-[10px] mt-[9px]">
              <path d="M4 0h17l-1 14H4z" fill="#2233cc" /><path d="M0 4h17v8H0z" fill="#3b8fd8" /><path d="M1 7h15" stroke="#dff" strokeDasharray="2 1" />
            </Svg>
          </div>
          <div className="absolute left-[12px] top-[11px] flex h-6 w-6 items-center justify-center rounded-full border border-[#888] bg-[#d9d9d9]/80 text-[15px] font-semibold">5</div>
        </div>
      </div>
    </div>
  );
}

export default function App() {
  return (
    <div className="flex h-[1080px] w-[1920px] flex-col overflow-hidden bg-[#141414] font-['Open_Sans',sans-serif]">
      <TitleBar />
      <MenuRow />
      <Ribbon />
      <div className="flex h-[717px] shrink-0">
        <LeftRail />
        <div className="flex w-[1703px] flex-col">
          <div className="flex h-[664px]">
            <Report />
            <div className="flex w-[49px] flex-col items-center border-l border-[#999] bg-white pt-[23px] shadow-[inset_0_6px_6px_-4px_rgba(0,0,0,0.25)]">
              <Chevrons c="#333" />
              <Svg w={12} h={14} className="ml-[5px] mt-[29px]"><path d="M11 0v14M6.500 2.500v9M2 5v4.500" stroke="#333" strokeWidth="1.700" /></Svg>
              <div className="mt-[14px] mr-[3px] text-[22.6px] font-medium leading-[30px] text-[#252423] [writing-mode:vertical-rl]">Filters</div>
            </div>
          </div>
          <PageTabs />
        </div>
        <SidePanel title="Sync slicers" />
        <SidePanel title="Visualizations" />
        <SidePanel title="Data" />
      </div>
      <StatusBar />
      <Taskbar />
    </div>
  );
}
